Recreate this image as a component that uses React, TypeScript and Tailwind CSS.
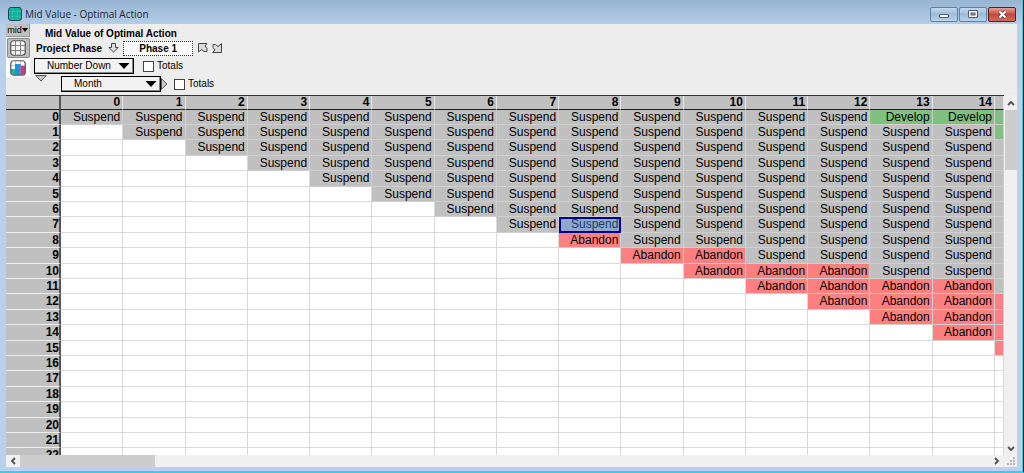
import { useState } from 'react';
import type { ReactNode } from 'react';

type Action = 'Suspend' | 'Develop' | 'Abandon';

const MONTHS = Array.from({ length: 16 }, (_, i) => i);
const DOWN = Array.from({ length: 23 }, (_, i) => i);

// first row of each month at which the project is abandoned
const ABANDON_FROM = [99, 99, 99, 99, 99, 99, 99, 99, 8, 9, 9, 10, 10, 11, 11, 12];
// number of rows at the top of each month that are developed
const DEVELOP_ROWS = [0, 0, 0, 0, 0, 0, 0, 0, 0, 0, 0, 0, 0, 1, 1, 2];

const ACTION_COLORS: Record<Action, string> = {
  Suspend: 'bg-[#c0c0c0]',
  Develop: 'bg-[#80c080]',
  Abandon: 'bg-[#ff8080]',
};

function getAction(row: number, month: number): Action | null {
  if (row > month) return null;
  if (row < DEVELOP_ROWS[month]) return 'Develop';
  if (row >= ABANDON_FROM[month]) return 'Abandon';
  return 'Suspend';
}

function WindowButton({ label, close, children }: { label: string; close?: boolean; children: ReactNode }) {
  return (
    <button
      aria-label={label}
      className={`flex h-[15px] w-7 items-center justify-center rounded-xs border ${
        close
          ? 'border-[#4c2428] bg-linear-to-b from-[#e0a198] via-[#c9473d] to-[#d5695c]'
          : 'border-[#65809c] bg-linear-to-b from-[#c4d8ee] via-[#9dbbdc] to-[#b8d2ec]'
      }`}
    >
      {children}
    </button>
  );
}

function TitleBar() {
  return (
    <div className="flex h-6 shrink-0 items-center bg-linear-to-b from-[#98b4d3] to-[#b4cde8] pt-1 pr-1.5 pl-2">
      <svg width="14" height="14" viewBox="0 0 14 14">
        <rect x="0.5" y="0.5" width="13" height="13" rx="2.5" fill="#16b09c" stroke="#24474b" />
        <path d="M1 4.5h12M1 9.5h12M4.5 1v12M9.5 1v12" stroke="#3cc3b0" strokeWidth="0.6" />
      </svg>
      <h1 className="ml-[3px] font-['Open_Sans',sans-serif] text-[10px] leading-4 text-[#1c2733]">
        Mid Value - Optimal Action
      </h1>
      <div className="ml-auto flex gap-px">
        <WindowButton label="Minimize">
          <svg width="10" height="9" viewBox="0 0 10 9">
            <rect x="0.5" y="4.5" width="9" height="3" rx="0.5" fill="#fff" stroke="#535c6b" />
          </svg>
        </WindowButton>
        <WindowButton label="Maximize">
          <svg width="10" height="9" viewBox="0 0 10 9">
            <rect x="0.5" y="0.5" width="9" height="7" rx="0.5" fill="#fff" stroke="#535c6b" />
            <rect x="3" y="3" width="4" height="2" fill="#8eaacb" stroke="#535c6b" />
          </svg>
        </WindowButton>
        <WindowButton label="Close" close>
          <svg width="11" height="9" viewBox="0 0 11 9">
            <path d="M2.5 1.5l6 6M8.5 1.5l-6 6" stroke="#5b4650" strokeWidth="3.6" />
            <path d="M2.5 1.5l6 6M8.5 1.5l-6 6" stroke="#fff" strokeWidth="2" />
          </svg>
        </WindowButton>
      </div>
    </div>
  );
}

function IndexSelect({ label, value, options }: { label: string; value: string; options: string[] }) {
  return (
    <div className="grid">
      <select
        aria-label={label}
        defaultValue={value}
        className="col-start-1 row-start-1 h-4 w-[100px] appearance-none border border-black bg-[#f2f2f2] pr-4 pl-3 text-[10px] leading-[14px] shadow-[inset_-1px_-1px_0_#888]"
      >
        {options.map((option) => (
          <option key={option}>{option}</option>
        ))}
      </select>
      <svg
        className="pointer-events-none col-start-1 row-start-1 mr-1 self-center justify-self-end"
        width="12"
        height="6"
        viewBox="0 0 12 6"
      >
        <path d="M0.5 0h11L6 6z" />
      </svg>
    </div>
  );
}

function TotalsCheckbox() {
  return (
    <label className="flex items-center gap-[3px] text-[10px] leading-3">
      <input type="checkbox" className="size-[11px] appearance-none border border-[#444] bg-white checked:bg-[#444]" />
      Totals
    </label>
  );
}

function ViewButtons() {
  return (
    <div className="flex w-6 flex-col items-center bg-[#ededed]">
      <button className="flex h-[13px] w-full items-center justify-center border-r border-b border-[#999] bg-[#c0c0c0] text-[9px] leading-3">
        mid
        <svg width="6" height="4" viewBox="0 0 6 4">
          <path d="M0 0h6L3 4z" />
        </svg>
      </button>
      <button
        aria-label="Table view"
        className="mt-px flex h-5 w-[23px] items-center justify-center rounded-xs border border-[#8a8a8a] bg-[#bdbdbd]"
      >
        <svg width="16" height="16" viewBox="0 0 16 16">
          <rect x="0.75" y="0.75" width="14.5" height="14.5" rx="3" fill="#f4f4f4" stroke="#555" strokeWidth="1.2" />
          <path d="M1 5.5h14M1 10.5h14M5.5 1v14M10.5 1v14" stroke="#777" strokeWidth="0.9" />
        </svg>
      </button>
      <button aria-label="Graph view" className="flex h-[19px] w-full items-center justify-center bg-white">
        <svg width="16" height="16" viewBox="0 0 16 16">
          <rect x="0.75" y="0.75" width="14.5" height="14.5" rx="3" fill="#fff" />
          <path d="M1 5.5h14M1 10.5h14M5.5 1v14M10.5 1v14" stroke="#aaa" strokeWidth="0.7" />
          <path d="M1 9h4v6H3l-2-2z" fill="#2cae9a" />
          <path d="M5 4h5.5v11H5z" fill="#0f9bd7" />
          <path d="M10.5 6H15v7l-2 2h-2.500z" fill="#d8397c" />
          <rect x="0.75" y="0.75" width="14.5" height="14.5" rx="3" fill="none" stroke="#555" strokeWidth="1.2" />
        </svg>
      </button>
    </div>
  );
}

function Toolbar() {
  return (
    <div className="flex h-[71px] shrink-0 items-start bg-[#ededed]">
      <ViewButtons />
      <div className="flex flex-col pt-[3px] pl-1">
        <h2 className="pl-[11px] text-[10px] leading-[13px] font-bold">Mid Value of Optimal Action</h2>
        <div className="flex h-4 items-center pl-0.5 text-[10px] font-bold">
          <span id="phase">Project Phase</span>
          <button aria-label="Choose phase" className="ml-1.5">
            <svg width="11" height="10" viewBox="0 0 11 10">
              <path d="M3.5 0.5h4v4h2.7L5.5 9 0.8 4.5h2.7z" fill="#e0e0e0" stroke="#444" />
            </svg>
          </button>
          <button
            aria-describedby="phase"
            className="ml-1 h-[15px] w-[70px] border border-dotted border-[#333] bg-white leading-[13px]"
          >
            Phase 1
          </button>
          <button aria-label="Previous phase" className="ml-[5px]">
            <svg width="10" height="10" viewBox="0 0 10 10">
              <path d="M0.500 0.500h8.500L7 3l2 2.500v3H6L3.500 6.500 0.500 9z" fill="#dcdcdc" stroke="#444" />
            </svg>
          </button>
          <button aria-label="Next phase" className="ml-1">
            <svg width="10" height="10" viewBox="0 0 10 10">
              <path d="M9.500 9.500H0.500L3 7 1 4.500v-3h2.500L6 3.500 9.500 0.500z" fill="#dcdcdc" stroke="#444" />
            </svg>
          </button>
        </div>
        <div className="mt-0.5 flex items-center gap-[9px]">
          <IndexSelect label="Row index" value="Number Down" options={['Number Down', 'Month']} />
          <TotalsCheckbox />
        </div>
        <div className="mt-px flex items-start pl-px">
          <svg width="12" height="7" viewBox="0 0 12 7">
            <path d="M0.7 0.5h10.6L6 6z" fill="#c8c8c8" stroke="#555" />
          </svg>
          <div className="mt-px ml-3.5 flex items-center">
            <IndexSelect label="Column index" value="Month" options={['Month', 'Number Down']} />
            <svg className="mr-1.5" width="7" height="12" viewBox="0 0 7 12">
              <path d="M0.5 0.7v10.6L6 6z" fill="#c8c8c8" stroke="#555" />
            </svg>
            <TotalsCheckbox />
          </div>
        </div>
      </div>
    </div>
  );
}

function ResultTable() {
  const [selected, setSelected] = useState('7-8');

  return (
    <div className="min-w-0 flex-1 overflow-hidden border-t border-[#333] bg-white">
      <table className="w-full table-fixed border-separate border-spacing-0 text-right text-[12px] leading-[14px]">
        <colgroup>
          <col className="w-[55px]" />
          {MONTHS.map((month) => (
            <col key={month} className={month === 15 ? 'w-[9px]' : ''} />
          ))}
        </colgroup>
        <thead>
          <tr className="h-[14px] bg-[#c0c0c0]">
            <th className="border-r-2 border-b border-r-[#555] border-b-[#222] p-0" />
            {MONTHS.map((month) => (
              <th
                key={month}
                className="overflow-hidden border-r border-b border-r-[#e8e8e8] border-b-[#222] p-0 pr-0.5 leading-[13px]"
              >
                {month < 15 && month}
              </th>
            ))}
          </tr>
        </thead>
        <tbody>
          {DOWN.map((row) => (
            <tr key={row} className="h-[15px] align-top nth-[5n+3]:h-4 nth-[5n+5]:h-4">
              <th className="border-r-2 border-b border-r-[#555] border-b-[#eee] bg-[#c0c0c0] p-0">{row}</th>
              {MONTHS.map((month) => {
                const action = getAction(row, month);
                const id = `${row}-${month}`;
                const isSelected = selected === id;
                return (
                  <td
                    key={month}
                    onClick={() => setSelected(id)}
                    className={`overflow-hidden border-r border-b p-0 pr-0.5 ${
                      action ? 'border-[#cfcfcf]' : 'border-[#d9d9d9]'
                    } ${
                      isSelected
                        ? 'bg-[#8ea9d0] text-[#1f3864] outline-2 -outline-offset-2 outline-[#00008b]'
                        : action
                          ? ACTION_COLORS[action]
                          : ''
                    }`}
                  >
                    {month < 15 && action}
                  </td>
                );
              })}
            </tr>
          ))}
        </tbody>
      </table>
    </div>
  );
}

function Chevron({ d }: { d: string }) {
  return (
    <svg width="8" height="8" viewBox="0 0 8 8" className="shrink-0">
      <path d={d} fill="none" stroke="#505050" strokeWidth="1.8" />
    </svg>
  );
}

export default function App() {
  return (
    <div className="flex h-screen flex-col overflow-hidden border-r border-b-2 border-r-black border-b-[#35cfe6] font-['Liberation_Sans',Arial,sans-serif] text-black">
      <div className="flex min-h-0 flex-1 flex-col border-r border-[#35cfe6] bg-[#b9d1ea]">
        <TitleBar />
        <div className="mr-[5px] mb-1 ml-1.5 flex min-h-0 flex-1 flex-col bg-[#f0f0f0]">
          <Toolbar />
          <div className="flex min-h-0 flex-1">
            <ResultTable />
            <div className="flex w-[13px] flex-col items-center bg-[#f0f0f0]">
              <button aria-label="Scroll up" className="flex h-[15px] items-center">
                <Chevron d="M1 6l3-3 3 3" />
              </button>
              <div className="h-[60px] w-3 self-end bg-[#cdcdcd]" />
              <button aria-label="Scroll down" className="mt-auto flex h-3 items-center">
                <Chevron d="M1 2l3 3 3-3" />
              </button>
            </div>
          </div>
          <div className="flex h-3 shrink-0 items-center">
            <button aria-label="Scroll left" className="flex w-3.5 justify-center">
              <Chevron d="M6 1L3 4l3 3" />
            </button>
            <div className="h-3 w-[135px] bg-[#cdcdcd]" />
            <button aria-label="Scroll right" className="mr-1.5 ml-auto">
              <Chevron d="M2 1l3 3-3 3" />
            </button>
            <svg width="8" height="8" viewBox="0 0 8 8" className="mr-0.5">
              <path d="M6 0h2v2H6zM3 3h2v2H3zM6 3h2v2H6zM0 6h2v2H0zM3 6h2v2H3zM6 6h2v2H6z" fill="#b8b8b8" />
            </svg>
          </div>
        </div>
      </div>
    </div>
  );
}
